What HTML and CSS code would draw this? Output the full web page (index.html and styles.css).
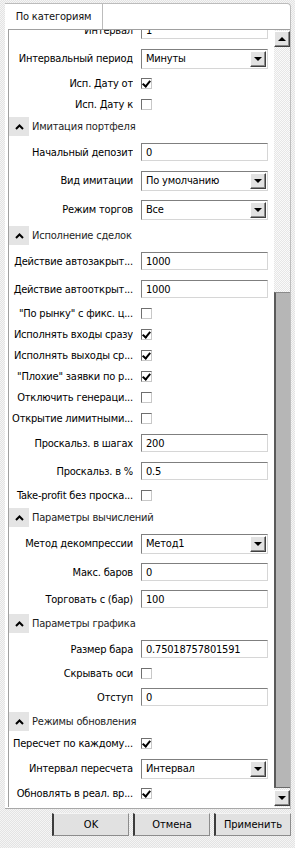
FILE: index.html
```html
<!DOCTYPE html>
<html lang="ru">
<head>
    <meta charset="UTF-8">
    <title>Свойства</title>
    <link rel="stylesheet" href="styles.css">
</head>
<body>
    <div class="window">
        <div class="panel">
            <div class="tab">По категориям</div>
            <div class="grid">
                <div class="rows">
                    <div class="row first">
                        <div class="label">Интервал</div>
                        <div class="field">1</div>
                    </div>
                    <div class="row sel">
                        <div class="label">Интервальный период</div>
                        <div class="select"><span class="value">Минуты</span><span class="drop"><i class="down"></i></span></div>
                    </div>
                    <div class="row chk">
                        <div class="label">Исп. Дату от</div>
                        <div><span class="check on"></span></div>
                    </div>
                    <div class="row chk">
                        <div class="label">Исп. Дату к</div>
                        <div><span class="check"></span></div>
                    </div>

                    <div class="group">
                        <span class="toggle"><svg width="9" height="6" viewBox="0 0 9 6"><path d="M1 5L4.5 1.5 8 5" fill="none" stroke="#000" stroke-width="2"/></svg></span>
                        Имитация портфеля
                    </div>
                    <div class="row">
                        <div class="label">Начальный депозит</div>
                        <div class="field">0</div>
                    </div>
                    <div class="row sel">
                        <div class="label">Вид имитации</div>
                        <div class="select"><span class="value">По умолчанию</span><span class="drop"><i class="down"></i></span></div>
                    </div>
                    <div class="row sel">
                        <div class="label">Режим торгов</div>
                        <div class="select"><span class="value">Все</span><span class="drop"><i class="down"></i></span></div>
                    </div>

                    <div class="group">
                        <span class="toggle"><svg width="9" height="6" viewBox="0 0 9 6"><path d="M1 5L4.5 1.5 8 5" fill="none" stroke="#000" stroke-width="2"/></svg></span>
                        Исполнение сделок
                    </div>
                    <div class="row">
                        <div class="label">Действие автозакрыт...</div>
                        <div class="field">1000</div>
                    </div>
                    <div class="row">
                        <div class="label">Действие автооткрыт...</div>
                        <div class="field">1000</div>
                    </div>
                    <div class="row chk">
                        <div class="label">"По рынку" с фикс. ц...</div>
                        <div><span class="check"></span></div>
                    </div>
                    <div class="row chk">
                        <div class="label">Исполнять входы сразу</div>
                        <div><span class="check on"></span></div>
                    </div>
                    <div class="row chk">
                        <div class="label">Исполнять выходы ср...</div>
                        <div><span class="check on"></span></div>
                    </div>
                    <div class="row chk">
                        <div class="label">"Плохие" заявки по р...</div>
                        <div><span class="check on"></span></div>
                    </div>
                    <div class="row chk">
                        <div class="label">Отключить генераци...</div>
                        <div><span class="check"></span></div>
                    </div>
                    <div class="row chk">
                        <div class="label">Открытие лимитными...</div>
                        <div><span class="check"></span></div>
                    </div>
                    <div class="row">
                        <div class="label">Проскальз. в шагах</div>
                        <div class="field">200</div>
                    </div>
                    <div class="row">
                        <div class="label">Проскальз. в %</div>
                        <div class="field">0.5</div>
                    </div>
                    <div class="row chk">
                        <div class="label">Take-profit без проска...</div>
                        <div><span class="check"></span></div>
                    </div>

                    <div class="group">
                        <span class="toggle"><svg width="9" height="6" viewBox="0 0 9 6"><path d="M1 5L4.5 1.5 8 5" fill="none" stroke="#000" stroke-width="2"/></svg></span>
                        Параметры вычислений
                    </div>
                    <div class="row sel">
                        <div class="label">Метод декомпрессии</div>
                        <div class="select"><span class="value">Метод1</span><span class="drop"><i class="down"></i></span></div>
                    </div>
                    <div class="row">
                        <div class="label">Макс. баров</div>
                        <div class="field">0</div>
                    </div>
                    <div class="row short">
                        <div class="label">Торговать с (бар)</div>
                        <div class="field">100</div>
                    </div>

                    <div class="group">
                        <span class="toggle"><svg width="9" height="6" viewBox="0 0 9 6"><path d="M1 5L4.5 1.5 8 5" fill="none" stroke="#000" stroke-width="2"/></svg></span>
                        Параметры графика
                    </div>
                    <div class="row">
                        <div class="label">Размер бара</div>
                        <div class="field">0.75018757801591</div>
                    </div>
                    <div class="row chk">
                        <div class="label">Скрывать оси</div>
                        <div><span class="check"></span></div>
                    </div>
                    <div class="row short">
                        <div class="label">Отступ</div>
                        <div class="field">0</div>
                    </div>

                    <div class="group">
                        <span class="toggle"><svg width="9" height="6" viewBox="0 0 9 6"><path d="M1 5L4.5 1.5 8 5" fill="none" stroke="#000" stroke-width="2"/></svg></span>
                        Режимы обновления
                    </div>
                    <div class="row chk">
                        <div class="label">Пересчет по каждому...</div>
                        <div><span class="check on"></span></div>
                    </div>
                    <div class="row sel">
                        <div class="label">Интервал пересчета</div>
                        <div class="select"><span class="value">Интервал</span><span class="drop"><i class="down"></i></span></div>
                    </div>
                    <div class="row chk">
                        <div class="label">Обновлять в реал. вр...</div>
                        <div><span class="check on"></span></div>
                    </div>
                </div>
                <div class="scroll">
                    <span class="sbtn"><i class="up"></i></span>
                    <div class="track"><div class="thumb"></div></div>
                    <span class="sbtn"><i class="down"></i></span>
                </div>
            </div>
        </div>
        <div class="actions">
            <button class="btn">OK</button>
            <button class="btn">Отмена</button>
            <button class="btn">Применить</button>
        </div>
    </div>
</body>
</html>
```
FILE: styles.css
```css
body {
    margin: 0;
    width: 295px;
    height: 848px;
    overflow: hidden;
    font: 11px "DejaVu Sans Condensed", "DejaVu Sans", sans-serif;
    letter-spacing: -0.2px;
    color: #000;
    background-color: #ececec;
    background-image: repeating-conic-gradient(#e3e3e3 0 25%, #f5f5f5 0 50%);
    background-size: 2px 2px;
}
.window {
    padding: 3px 4px 0 5px;
}
.panel {
    background: #fff;
    border-top: 1px solid #bcbcbc;
    border-right: 1px solid #bcbcbc;
    border-bottom: 1px solid #a8a8a8;
    border-top-right-radius: 4px;
    padding-bottom: 1px;
}
.tab {
    width: 97px;
    height: 25px;
    border-right: 1px solid #bcbcbc;
    display: flex;
    align-items: center;
    justify-content: center;
    color: #111;
}
.grid {
    margin-left: 3px;
    height: 777px;
    border-top: 1px solid #a0a0a0;
    border-left: 1px solid #a0a0a0;
    display: flex;
}
.rows {
    flex: 1;
    overflow: hidden;
}
.row {
    display: grid;
    grid-template-columns: 124px 127px;
    column-gap: 8px;
    align-items: center;
    height: 28px;
}
.row.first {
    margin-top: -14px;
}
.row.sel {
    height: 29px;
}
.row.chk {
    height: 21px;
}
.row.short {
    height: 26px;
}
.label {
    text-align: right;
    white-space: nowrap;
    overflow: hidden;
    text-overflow: ellipsis;
}
.field,
.select {
    box-sizing: border-box;
    background: #fff;
    border: 1px solid;
    border-color: #7f7f7f #d6d6d6 #d6d6d6 #7f7f7f;
    display: flex;
    align-items: center;
    white-space: nowrap;
}
.field {
    height: 18px;
    padding-left: 4px;
}
.select {
    height: 20px;
    padding-left: 4px;
    justify-content: space-between;
}
.drop {
    width: 16px;
    height: 16px;
    box-sizing: border-box;
    margin-right: 1px;
    background: #e2e2e2;
    border: 1px solid;
    border-color: #fff #404040 #404040 #fff;
    box-shadow: inset -1px -1px #8a8a8a;
    display: flex;
    align-items: center;
    justify-content: center;
}
.down,
.up {
    width: 0;
    height: 0;
    border-left: 4px solid transparent;
    border-right: 4px solid transparent;
}
.down {
    border-top: 4px solid #000;
}
.up {
    border-bottom: 4px solid #000;
}
.check {
    display: block;
    box-sizing: border-box;
    width: 11px;
    height: 11px;
    background: #fff;
    border: 1px solid;
    border-color: #6f6f6f #c8c8c8 #c8c8c8 #6f6f6f;
    position: relative;
}
.check.on::after {
    content: "";
    position: absolute;
    left: 2px;
    top: 0;
    width: 3px;
    height: 6px;
    border: solid #000;
    border-width: 0 2px 2px 0;
    transform: rotate(40deg);
}
.group {
    height: 23px;
    display: flex;
    align-items: center;
    gap: 3px;
    color: #1e1e1e;
}
.toggle {
    width: 20px;
    height: 19px;
    background: #e4e4e4;
    display: flex;
    align-items: center;
    justify-content: center;
}
.scroll {
    width: 16px;
    display: flex;
    flex-direction: column;
    background-color: #f1f1f1;
    background-image: repeating-conic-gradient(#e6e6e6 0 25%, #fafafa 0 50%);
    background-size: 2px 2px;
}
.sbtn {
    width: 16px;
    height: 16px;
    box-sizing: border-box;
    margin: 1px 0;
    background: #e2e2e2;
    border: 1px solid;
    border-color: #fff #404040 #404040 #fff;
    box-shadow: inset -1px -1px #8a8a8a;
    display: flex;
    align-items: center;
    justify-content: center;
}
.track {
    flex: 1;
    display: flex;
    flex-direction: column;
}
.thumb {
    flex: 1;
    margin: 244px 0 1px;
    background: #b6b6b6;
    border-left: 2px solid #5a5a5a;
    border-top: 1px solid #8a8a8a;
    border-bottom: 1px solid #6a6a6a;
}
.actions {
    display: flex;
    justify-content: flex-end;
    gap: 4px;
    padding-top: 4px;
}
.btn {
    width: 77px;
    height: 23px;
    padding: 0;
    font: inherit;
    color: #000;
    background: #e1e1e1;
    border: 1px solid #8c8c8c;
    border-left: 2px solid #3c3c3c;
    border-top-color: #f4f4f4;
}
```
